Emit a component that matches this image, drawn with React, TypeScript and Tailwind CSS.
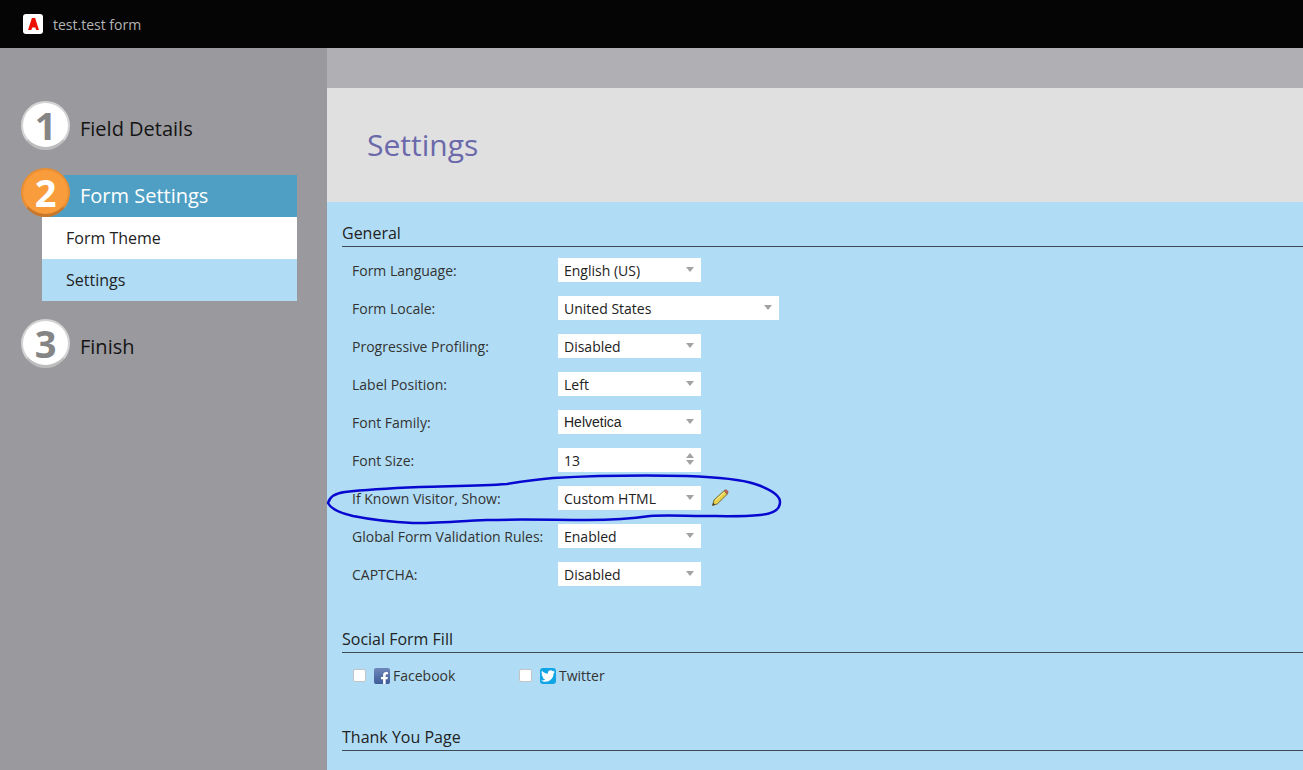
import React from "react";
import { FaTwitter, FaFacebookF } from "react-icons/fa";

const rows = [
  { label: "Form Language:", value: "English (US)" },
  { label: "Form Locale:", value: "United States", wide: true },
  { label: "Progressive Profiling:", value: "Disabled" },
  { label: "Label Position:", value: "Left" },
  { label: "Font Family:", value: "Helvetica", arial: true },
  { label: "Font Size:", value: "13", spinner: true },
  { label: "If Known Visitor, Show:", value: "Custom HTML", pencil: true },
  { label: "Global Form Validation Rules:", value: "Enabled" },
  { label: "CAPTCHA:", value: "Disabled" },
];

const Caret = () => (
  <span className="-mt-[2px] w-0 h-0 border-x-[4.5px] border-x-transparent border-t-[5px] border-t-[#a3a3a3]" />
);

const Spinner = () => (
  <span className="-mt-[2px] flex flex-col gap-[2px]">
    <span className="w-0 h-0 border-x-[4.5px] border-x-transparent border-b-[5px] border-b-[#a3a3a3]" />
    <span className="w-0 h-0 border-x-[4.5px] border-x-transparent border-t-[5px] border-t-[#a3a3a3]" />
  </span>
);

const Pencil = () => (
  <svg width="18" height="18" viewBox="0 0 18 18" className="ml-[10px]">
    <path d="M1.5 16.5 L3 11 L13 1.8 L16.4 5 L6.5 14.8 Z" fill="#e8cf4a" stroke="#6b6330" strokeWidth="0.9" strokeLinejoin="round" />
    <path d="M13 1.8 L14.3 0.9 Q15 0.5 15.6 1 L17 2.4 Q17.5 3 17 3.6 L16.4 5 Z" fill="#d9605f" stroke="#7a5a4a" strokeWidth="0.7" />
    <path d="M1.5 16.5 L2.2 13.8 L4.2 15.8 Z" fill="#3a3a30" />
    <path d="M4.5 11.5 L13.6 3" stroke="#fff3a8" strokeWidth="1" />
  </svg>
);

const Step = ({ n, label }: { n: number; label: string }) => (
  <div className="flex items-center pl-[21px]">
    <div className="w-[49px] h-[49px] rounded-full bg-white border-2 border-[#d4d4d4] border-b-[3px] border-b-[#bdbdbd] flex items-center justify-center text-[#858585] text-[38px] font-bold leading-none">
      {n}
    </div>
    <span className="ml-[10px] pt-[6px] text-[20px] text-[#141414]">{label}</span>
  </div>
);

const SectionHead = ({ title }: { title: string }) => (
  <div className="h-[25px] border-b border-[#3d4a52] text-[16px] leading-[22px] text-[#222]">{title}</div>
);

export default function App() {
  return (
    <div
      className="relative h-[770px] overflow-hidden flex flex-col"
      style={{ fontFamily: '"Open Sans", sans-serif' }}
    >
      <header className="h-[48px] shrink-0 bg-[#050505] flex items-center pl-[23px]">
        <div className="w-[20px] h-[20px] rounded-[3px] bg-white flex items-center justify-center">
          <svg width="11" height="12" viewBox="0 0 10 11" fill="#eb1000">
            <path d="M3.5 0H6.5L10 11H7.4L6.7 8.8H3.8L5 5.8 3 11H0Z" />
          </svg>
        </div>
        <span className="ml-[10px] text-[14px] text-[#b4b4b4]">test.test form</span>
      </header>

      <div className="flex flex-1 min-h-0">
        <aside className="w-[327px] shrink-0 bg-[#9a999e] pt-[53px]">
          <Step n={1} label="Field Details" />

          <div className="relative mt-[25px] ml-[42px] w-[255px]">
            <div className="h-[42px] bg-[#4f9fc4] flex items-center pl-[38px] text-[20px] text-white">
              Form Settings
            </div>
            <div className="absolute left-[-21px] top-[-7px] w-[49px] h-[49px] rounded-full bg-[#f89c3c] border-2 border-[#e98e32] border-b-[3px] border-b-[#c9772a] flex items-center justify-center text-white text-[38px] font-bold leading-none">
              2
            </div>
            <div className="h-[42px] bg-white flex items-center pl-[24px] text-[16px] text-[#222]">
              Form Theme
            </div>
            <div className="h-[42px] bg-[#b0ddf5] flex items-center pl-[24px] text-[16px] text-[#222]">
              Settings
            </div>
          </div>

          <div className="mt-[18px]">
            <Step n={3} label="Finish" />
          </div>
        </aside>

        <main className="flex-1 min-w-0 flex flex-col">
          <div className="h-[40px] shrink-0 bg-[#b0afb4]" />
          <div className="h-[114px] shrink-0 bg-[#e0e0e0] flex items-center pl-[40px] pb-[2px] text-[30px] text-[#6b69ab]">
            Settings
          </div>
          <div className="flex-1 bg-[#b0ddf5] pl-[15px] pt-[20px]">
            <SectionHead title="General" />
            <div className="mt-[11px] pl-[10px] flex flex-col gap-[14px]">
              {rows.map((r) => (
                <div key={r.label} className="h-[24px] flex items-center text-[14px] text-[#333]">
                  <span className="w-[206px] shrink-0">{r.label}</span>
                  <div
                    className={`h-[24px] bg-white flex items-center justify-between pl-[6px] pr-[7px] ${
                      r.wide ? "w-[221px]" : "w-[143px]"
                    }`}
                  >
                    <span
                      className="text-[#222]"
                      style={r.arial ? { fontFamily: '"Liberation Sans", sans-serif' } : undefined}
                    >
                      {r.value}
                    </span>
                    {r.spinner ? <Spinner /> : <Caret />}
                  </div>
                  {r.pencil && <Pencil />}
                </div>
              ))}
            </div>

            <div className="mt-[42px]">
              <SectionHead title="Social Form Fill" />
            </div>
            <div className="mt-[15px] pl-[11px] h-[16px] flex items-center text-[14px] text-[#333]">
              <span className="-mt-[2px] w-[13px] h-[13px] rounded-[2px] bg-white border border-[#c4c4c4]" />
              <span className="ml-[8px] w-[16px] h-[16px] rounded-[2px] bg-linear-to-b from-[#6f88ba] to-[#3e5c99] flex items-end justify-end overflow-hidden">
                <FaFacebookF className="text-white w-[11px] h-[13px] -mb-[1px]" />
              </span>
              <span className="ml-[3px] -mt-[1px] w-[126px]">Facebook</span>
              <span className="-mt-[2px] w-[13px] h-[13px] rounded-[2px] bg-white border border-[#c4c4c4]" />
              <span className="ml-[8px] w-[16px] h-[16px] rounded-[3px] bg-[#12a5e6] flex items-center justify-center">
                <FaTwitter className="text-white w-[14px] h-[14px]" />
              </span>
              <span className="ml-[3px] -mt-[1px]">Twitter</span>
            </div>

            <div className="mt-[42px]">
              <SectionHead title="Thank You Page" />
            </div>
          </div>
        </main>
      </div>

      {/* hand drawn annotation round the visitor row */}
      <svg
        className="absolute inset-0 pointer-events-none"
        width="1303"
        height="770"
        viewBox="0 0 1303 770"
        fill="none"
      >
        <path
          d="M328 503 C330 496 336 493 345 492 C370 489 395 488 420 487 C450 486 480 486 507 484 C525 481 540 479 553 478 C590 476 640 475 687 476 C715 477 740 479 755 484 C770 489 780 495 780 502 C780 510 772 514 760 515 C740 517 720 516 703 516 C685 516 668 515 650 516 C630 519 610 520 587 520 C555 520 520 519 487 520 C460 521 435 523 413 523 C390 522 368 519 353 516 C340 513 331 509 328 503 Z"
          stroke="#0808d0"
          strokeWidth="2.5"
        />
      </svg>
    </div>
  );
}
